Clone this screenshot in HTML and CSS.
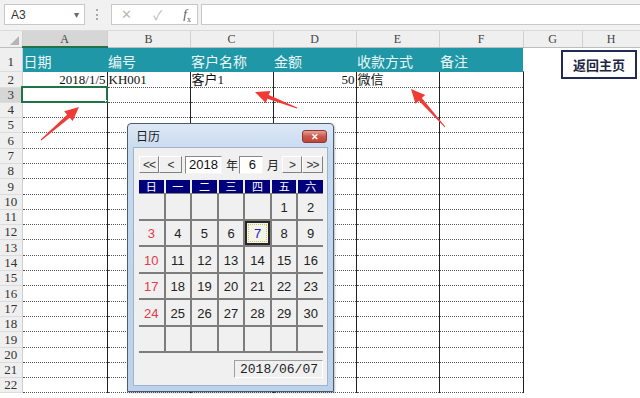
FILE: index.html
```html
<!DOCTYPE html>
<html lang="zh">
<head>
<meta charset="utf-8">
<title>日历</title>
<link rel="stylesheet" href="styles.css">
</head>
<body>
<div class="topbar">
  <div class="namebox"><span>A3</span><span class="caret">▾</span></div>
  <div class="grip"></div>
  <div class="fxbox"><span class="ico x">✕</span><span class="ico ok">✓</span><span class="ico fx"><i>f</i><sub>x</sub></span></div>
  <div class="formula"></div>
</div>
<table class="sheet">
  <colgroup>
    <col class="c-rh"><col class="c-a"><col class="c-b"><col class="c-c"><col class="c-d"><col class="c-e"><col class="c-f"><col class="c-g"><col class="c-h">
  </colgroup>
  <tr class="colhead"><th class="corner"><span class="tri"></span></th><th class="sel">A</th><th>B</th><th>C</th><th>D</th><th>E</th><th>F</th><th>G</th><th>H</th></tr>
  <tr class="r1"><th>1</th><td class="hd">日期</td><td class="hd">编号</td><td class="hd">客户名称</td><td class="hd">金额</td><td class="hd">收款方式</td><td class="hd">备注</td><td class="x"></td><td class="x"></td></tr>
  <tr class="r2"><th>2</th><td class="num">2018/1/5</td><td>KH001</td><td>客户1</td><td class="num">50</td><td>微信</td><td></td><td class="x"></td><td class="x"></td></tr>
  <tr><th class="sel">3</th><td class="active"><span class="handle"></span></td><td></td><td></td><td></td><td></td><td></td><td class="x"></td><td class="x"></td></tr>
  <tr><th>4</th><td></td><td></td><td></td><td></td><td></td><td></td><td class="x"></td><td class="x"></td></tr>
  <tr><th>5</th><td></td><td></td><td></td><td></td><td></td><td></td><td class="x"></td><td class="x"></td></tr>
  <tr><th>6</th><td></td><td></td><td></td><td></td><td></td><td></td><td class="x"></td><td class="x"></td></tr>
  <tr><th>7</th><td></td><td></td><td></td><td></td><td></td><td></td><td class="x"></td><td class="x"></td></tr>
  <tr><th>8</th><td></td><td></td><td></td><td></td><td></td><td></td><td class="x"></td><td class="x"></td></tr>
  <tr><th>9</th><td></td><td></td><td></td><td></td><td></td><td></td><td class="x"></td><td class="x"></td></tr>
  <tr><th>10</th><td></td><td></td><td></td><td></td><td></td><td></td><td class="x"></td><td class="x"></td></tr>
  <tr><th>11</th><td></td><td></td><td></td><td></td><td></td><td></td><td class="x"></td><td class="x"></td></tr>
  <tr><th>12</th><td></td><td></td><td></td><td></td><td></td><td></td><td class="x"></td><td class="x"></td></tr>
  <tr><th>13</th><td></td><td></td><td></td><td></td><td></td><td></td><td class="x"></td><td class="x"></td></tr>
  <tr><th>14</th><td></td><td></td><td></td><td></td><td></td><td></td><td class="x"></td><td class="x"></td></tr>
  <tr><th>15</th><td></td><td></td><td></td><td></td><td></td><td></td><td class="x"></td><td class="x"></td></tr>
  <tr><th>16</th><td></td><td></td><td></td><td></td><td></td><td></td><td class="x"></td><td class="x"></td></tr>
  <tr><th>17</th><td></td><td></td><td></td><td></td><td></td><td></td><td class="x"></td><td class="x"></td></tr>
  <tr><th>18</th><td></td><td></td><td></td><td></td><td></td><td></td><td class="x"></td><td class="x"></td></tr>
  <tr><th>19</th><td></td><td></td><td></td><td></td><td></td><td></td><td class="x"></td><td class="x"></td></tr>
  <tr><th>20</th><td></td><td></td><td></td><td></td><td></td><td></td><td class="x"></td><td class="x"></td></tr>
  <tr><th>21</th><td></td><td></td><td></td><td></td><td></td><td></td><td class="x"></td><td class="x"></td></tr>
  <tr><th>22</th><td></td><td></td><td></td><td></td><td></td><td></td><td class="x"></td><td class="x"></td></tr>
</table>

<div class="homebtn">返回主页</div>

<div class="dlg">
  <div class="dlg-title"><span>日历</span><span class="close">✕</span></div>
  <div class="dlg-body">
    <div class="nav">
      <div class="nbtn w-dbl">&lt;&lt;</div>
      <div class="nbtn w-sgl">&lt;</div>
      <div class="field year">2018</div>
      <span class="lbl y">年</span>
      <div class="field month">6</div>
      <span class="lbl m">月</span>
      <div class="nbtn w-sgl2">&gt;</div>
      <div class="nbtn w-dbl2">&gt;&gt;</div>
    </div>
    <div class="weekdays">
      <div>日</div><div>一</div><div>二</div><div>三</div><div>四</div><div>五</div><div>六</div>
    </div>
    <div class="days">
      <div></div><div></div><div></div><div></div><div></div><div>1</div><div>2</div>
      <div class="sun">3</div><div>4</div><div>5</div><div>6</div><div class="today">7</div><div>8</div><div>9</div>
      <div class="sun">10</div><div>11</div><div>12</div><div>13</div><div>14</div><div>15</div><div>16</div>
      <div class="sun">17</div><div>18</div><div>19</div><div>20</div><div>21</div><div>22</div><div>23</div>
      <div class="sun">24</div><div>25</div><div>26</div><div>27</div><div>28</div><div>29</div><div>30</div>
      <div></div><div></div><div></div><div></div><div></div><div></div><div></div>
    </div>
    <div class="foot"><div class="datebox">2018/06/07</div></div>
  </div>
</div>

<svg class="arrows" width="640" height="398" viewBox="0 0 640 398">
  <polygon points="41.33,140.38 69.74,117.69 72.69,121.09 79,107 64.17,111.27 67.12,114.67 40.67,139.62"/>
  <polygon points="297.18,107.53 268.79,95.11 270.39,90.91 255,92 265.77,103.05 267.37,98.85 296.82,108.47"/>
  <polygon points="445.37,126.67 421.83,98.10 425.18,95.10 411,89 415.50,103.76 418.85,100.76 444.63,127.33"/>
</svg>
</body>
</html>
```

FILE: styles.css
```css
html, body {
  margin: 0;
  padding: 0;
}
body {
  width: 640px;
  height: 398px;
  overflow: hidden;
  background: #fff;
  position: relative;
  font-family: "Liberation Sans", "Noto Sans CJK SC", sans-serif;
}

/* formula bar */
.topbar {
  height: 31px;
  box-sizing: border-box;
  background: #f1f1f1;
  display: flex;
  align-items: flex-start;
  padding: 4px 0 0 4px;
  border-bottom: 1px solid #dadada;
}
.namebox {
  width: 81px;
  height: 21px;
  box-sizing: border-box;
  background: #fff;
  border: 1px solid #c8c8c8;
  display: flex;
  align-items: center;
  justify-content: space-between;
  padding: 0 5px 0 6px;
  font-size: 12px;
  color: #333;
}
.caret {
  font-size: 10px;
  color: #666;
}
.grip {
  width: 2px;
  height: 11px;
  margin: 5px 11px 0 11px;
  border-left: 2px dotted #a8a8a8;
}
.fxbox {
  width: 87px;
  height: 21px;
  box-sizing: border-box;
  background: #fff;
  border: 1px solid #c8c8c8;
  display: flex;
  align-items: center;
  padding: 0 6px 0 9px;
  justify-content: space-between;
}
.ico {
  font-size: 13px;
  color: #b8b8b8;
}
.ico.fx {
  color: #555;
  font-family: "Liberation Serif", serif;
  font-size: 13px;
}
.ico.fx sub {
  font-size: 8px;
}
.formula {
  flex: 1;
  height: 21px;
  margin-left: 3px;
  box-sizing: border-box;
  background: #fff;
  border: 1px solid #c8c8c8;
  border-right: none;
}

/* sheet */
.sheet {
  border-collapse: collapse;
  table-layout: fixed;
  width: 640px;
  font-family: "Liberation Serif", "Noto Sans CJK SC", serif;
  font-size: 13px;
  color: #111;
}
.c-rh { width: 22px; }
.c-a { width: 85px; }
.c-b { width: 83px; }
.c-c { width: 83px; }
.c-d { width: 83px; }
.c-e { width: 83px; }
.c-f { width: 84px; }
.c-g { width: 59px; }
.c-h { width: 58px; }

.sheet tr { height: 15.3px; }
.sheet th, .sheet td {
  padding: 0 1px;
  overflow: hidden;
  white-space: nowrap;
  line-height: 14px;
  vertical-align: bottom;
}
.sheet td {
  border-right: 1px solid #222;
  border-bottom: 1px dotted #555;
}
.sheet td.x {
  border: none;
}
.sheet th {
  background: #efefef;
  font-weight: normal;
  color: #333;
  font-size: 13px;
  text-align: center;
  border-right: 1px solid #cfcfcf;
  border-bottom: 1px solid #dcdcdc;
}
.sheet th.sel {
  background: #d6d6d6;
}
.sheet tr.colhead { height: 16px; }
.colhead th {
  font-size: 12px;
  vertical-align: middle;
  border-bottom: 1px solid #bdbdbd;
  color: #444;
}
.sheet .colhead th.sel {
  border-bottom: 2px solid #217346;
}
.corner { position: relative; }
.tri {
  position: absolute;
  right: 3px;
  bottom: 2px;
  width: 0;
  height: 0;
  border-left: 9px solid transparent;
  border-bottom: 9px solid #b5b5b5;
}
.sheet tr.r1 { height: 24px; }
.sheet .r1 td.hd {
  background: #1f97a6;
  color: #eaf6f7;
  font-family: "Noto Sans CJK SC", sans-serif;
  font-size: 14px;
  line-height: 20px;
  border-right: none;
  border-bottom: 1px solid #1f97a6;
}
.sheet .r1 th { line-height: 18px; }
.sheet tr.r2 { height: 16px; }
.sheet td.num { text-align: right; }
.sheet td.active {
  position: relative;
  outline: 2px solid #217346;
  outline-offset: -1px;
}
.handle {
  position: absolute;
  right: -3px;
  bottom: -3px;
  width: 5px;
  height: 5px;
  background: #217346;
  border: 1px solid #fff;
  box-sizing: border-box;
}

/* floating button */
.homebtn {
  position: absolute;
  left: 561px;
  top: 50px;
  width: 76px;
  height: 29px;
  box-sizing: border-box;
  border: 2px solid #1f2a55;
  background: #fff;
  display: flex;
  align-items: center;
  justify-content: center;
  font-family: "Noto Sans CJK SC", sans-serif;
  font-weight: bold;
  font-size: 13px;
  color: #1d2740;
}

/* calendar dialog */
.dlg {
  position: absolute;
  left: 127px;
  top: 123px;
  width: 207px;
  height: 269px;
  box-sizing: border-box;
  border: 1px solid #4d5d70;
  border-radius: 4px 4px 0 0;
  background: linear-gradient(#dce8f5, #c5d9ef 30px, #bcd2ec);
  padding: 0 5px 5px 5px;
  display: flex;
  flex-direction: column;
  box-shadow: 1px 1px 2px rgba(0,0,0,0.25);
}
.dlg-title {
  height: 23px;
  display: flex;
  align-items: center;
  justify-content: space-between;
  font-size: 12px;
  color: #1b1b1b;
  padding-left: 3px;
}
.close {
  width: 25px;
  height: 13px;
  box-sizing: border-box;
  border: 1px solid #8a3a36;
  border-radius: 3px;
  background: linear-gradient(#e8a095, #c9574a 50%, #c0453a);
  color: #fff;
  font-size: 9px;
  font-weight: bold;
  display: flex;
  align-items: center;
  justify-content: center;
  margin-right: 1px;
  margin-top: 2px;
}
.dlg-body {
  flex: 1;
  background: #f0f0f0;
  border: 1px solid #9fb4cc;
  padding: 8px 4px 0 5px;
  display: flex;
  flex-direction: column;
}
.nav {
  display: flex;
  align-items: center;
  height: 17px;
  width: 184px;
  font-size: 12px;
  color: #222;
}
.nav > * { flex-shrink: 0; }
.nbtn {
  height: 17px;
  box-sizing: border-box;
  border: 1px solid;
  border-color: #fff #808080 #808080 #fff;
  background: #f0f0f0;
  display: flex;
  align-items: center;
  justify-content: center;
  font-size: 12px;
  color: #333;
  letter-spacing: -1px;
}
.w-dbl { width: 20px; }
.w-sgl { width: 23px; }
.w-sgl2 { width: 20px; }
.w-dbl2 { width: 21px; }
.field {
  height: 18px;
  box-sizing: border-box;
  background: #fff;
  border: 1px solid;
  border-color: #8a8a8a #f5f5f5 #f5f5f5 #8a8a8a;
  display: flex;
  align-items: center;
  justify-content: flex-end;
  font-size: 13px;
  color: #111;
}
.year { width: 37px; margin-left: 3px; padding-right: 3px; }
.month { width: 24px; padding-right: 6px; }
.lbl {
  font-size: 12px;
  width: 12px;
  font-family: "Noto Sans CJK SC", sans-serif;
}
.lbl.y { margin: 0 1px 0 4px; }
.lbl.m { margin: 0 3px 0 4px; }
.weekdays {
  margin-top: 7px;
  display: grid;
  grid-template-columns: repeat(7, 1fr);
  gap: 2px;
  height: 13px;
  width: 184px;
}
.weekdays div {
  background: #00007c;
  color: #fff;
  font-size: 11px;
  line-height: 13px;
  text-align: center;
  font-family: "Noto Sans CJK SC", sans-serif;
}
.days {
  display: grid;
  grid-template-columns: repeat(7, 1fr);
  grid-auto-rows: 24.5px;
  gap: 2px;
  background: #7d7d7d;
  padding: 1px 0 2px 0;
  width: 184px;
}
.days div {
  background: #f0f0f0;
  display: flex;
  align-items: center;
  justify-content: center;
  font-size: 13px;
  color: #222;
  padding-top: 2px;
  box-sizing: border-box;
}
.days div.sun { color: #e23a4e; }
.days div.today {
  color: #2020d0;
  background: #f3f3e6;
  border: 2px solid #262626;
  outline: 1px dotted #c8c27a;
  outline-offset: -4px;
}
.foot {
  display: flex;
  justify-content: flex-end;
  margin-top: 7px;
  width: 184px;
}
.datebox {
  width: 89px;
  height: 18px;
  box-sizing: border-box;
  border: 1px solid;
  border-color: #a0a0a0 #fff #fff #a0a0a0;
  background: #f0f0f0;
  font-family: "Liberation Mono", monospace;
  font-size: 13px;
  color: #222;
  display: flex;
  align-items: center;
  justify-content: flex-end;
  padding-right: 4px;
}

/* annotation arrows */
.arrows {
  position: absolute;
  left: 0;
  top: 0;
  pointer-events: none;
}
.arrows polygon {
  fill: #f03a36;
}
```
